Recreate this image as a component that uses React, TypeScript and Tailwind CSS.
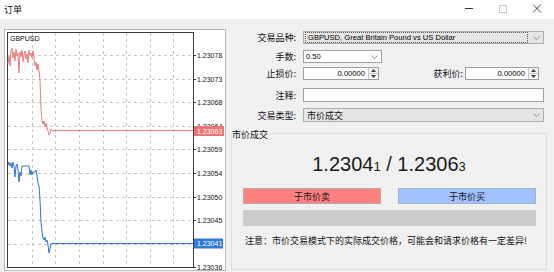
import React from "react";

const hGrid = [55, 79, 102, 126, 149, 173, 197, 220, 244];
const vGrid = [32, 55, 79, 103, 126, 150, 173];
const labels: [string, number][] = [
  ["1.23078", 55],
  ["1.23073", 79],
  ["1.23068", 102],
  ["1.23064", 126],
  ["1.23059", 149],
  ["1.23054", 173],
  ["1.23050", 197],
  ["1.23045", 220],
  ["1.23036", 267],
];

const redPts =
  "8,64 9,56 10,66 11,50 12,48 13,58 14,52 15,61 16,49 17,56 18,53 19,73 20,52 21,57 22,50 23,62 24,55 25,51 26,59 27,54 28,63 29,50 30,56 31,53 32,58 33,51 34,58 35,66 36,62 37,70 38,64 39,71 40,80 41,108 42,120 43,124 44,121 45,127 46,123 47,128 48,131 49,135 50,133 51,129 52,130.5 193,130.5";
const bluePts =
  "8,165 9,162 10,166 11,163 12,168 13,162 14,166 15,177 16,166 17,164 18,170 19,182 20,172 21,176 22,166 23,166 26,166 29,166 30,175 31,170 32,175 33,172 35,172 36,170 37,176 38,183 39,186 40,200 41,222 42,232 43,238 44,240 45,237 46,242 47,240 48,245 49,253 50,249 51,244 52,243.5 193,243.5";

function Chart() {
  return (
    <div className="ml-[4px] mt-[10px] w-[222px] h-[242px] border border-[#b9b9b9] bg-white shrink-0">
      <svg width="220" height="240" viewBox="0 0 220 240" className="block">
        <g transform="translate(-5,-30)">
          <rect x="7.5" y="32.5" width="186" height="235" fill="#ffffff" stroke="#3a3a3a" strokeWidth="1" />
          {hGrid.map((y) => (
            <line key={"h" + y} x1="8" x2="193" y1={y + 0.5} y2={y + 0.5} stroke="#c6c6c6" strokeDasharray="3 3" strokeWidth="1" />
          ))}
          {vGrid.map((x) => (
            <line key={"v" + x} x1={x + 0.5} x2={x + 0.5} y1="33" y2="267" stroke="#c6c6c6" strokeDasharray="3 3" strokeWidth="1" />
          ))}
          {labels.map(([t, y]) => (
            <g key={t}>
              <line x1="193" x2="196" y1={y + 0.5} y2={y + 0.5} stroke="#3a3a3a" strokeWidth="1" />
              <text x="197" y={y + 0.5} fontSize="7" fontFamily="'Liberation Sans', sans-serif" dominantBaseline="central" fill="#111">
                {t}
              </text>
            </g>
          ))}
          <text x="10" y="38" fontSize="7" fontFamily="'Liberation Sans', sans-serif" dominantBaseline="central" fill="#111">
            GBPUSD
          </text>
          <polyline points={redPts} fill="none" stroke="#ee7b7b" strokeWidth="1" />
          <polyline points={bluePts} fill="none" stroke="#2f74d6" strokeWidth="1" />
          <rect x="194" y="126" width="30" height="10" fill="#f07373" />
          <text x="197" y="131" fontSize="7" fontFamily="'Liberation Sans', sans-serif" dominantBaseline="central" fill="#ffffff">
            1.23063
          </text>
          <rect x="194" y="238.5" width="29" height="10" fill="#2e7be0" />
          <text x="197" y="243.5" fontSize="7" fontFamily="'Liberation Sans', sans-serif" dominantBaseline="central" fill="#ffffff">
            1.23041
          </text>
        </g>
      </svg>
    </div>
  );
}

function Chevron() {
  return (
    <svg width="7" height="4" viewBox="0 0 7 4" className="block">
      <path d="M0.5 0.5 L3.5 3.5 L6.5 0.5" fill="none" stroke="#808080" strokeWidth="0.9" />
    </svg>
  );
}

function Spin() {
  return (
    <div className="w-[10px] h-full flex flex-col border-l border-[#c8c8c8] bg-[#f3f3f3]">
      <div className="flex-1 flex items-center justify-center">
        <svg width="5" height="3" viewBox="0 0 5 3" className="block">
          <path d="M0 3 L2.5 0 L5 3 Z" fill="#404040" />
        </svg>
      </div>
      <div className="h-px bg-[#c8c8c8]" />
      <div className="flex-1 flex items-center justify-center">
        <svg width="5" height="3" viewBox="0 0 5 3" className="block">
          <path d="M0 0 L2.5 3 L5 0 Z" fill="#404040" />
        </svg>
      </div>
    </div>
  );
}

function Label({ children }: { children: React.ReactNode }) {
  return <div className="w-[65px] text-right text-[9px] leading-none text-[#111]">{children}</div>;
}

export default function App() {
  return (
    <div className="w-[554px] h-[272px] bg-[#f0f0f0] overflow-hidden flex flex-col font-['Noto_Sans_CJK_SC','Noto_Sans',sans-serif] text-[#111]">
      {/* title bar */}
      <div className="h-[19px] bg-white flex items-center shrink-0">
        <span className="ml-[4px] text-[9px] leading-none">订单</span>
        <div className="ml-auto flex h-full">
          <svg width="34" height="19" viewBox="0 0 34 19" className="block">
            <line x1="13" x2="21" y1="8.5" y2="8.5" stroke="#333" strokeWidth="1" />
          </svg>
          <svg width="34" height="19" viewBox="0 0 34 19" className="block">
            <rect x="13.5" y="5.5" width="7" height="7" fill="none" stroke="#c4c4c4" strokeWidth="1" />
          </svg>
          <svg width="34" height="19" viewBox="0 0 34 19" className="block">
            <path d="M13 4.5 L21 12.5 M21 4.5 L13 12.5" stroke="#333" strokeWidth="0.9" />
          </svg>
        </div>
      </div>

      {/* body */}
      <div className="flex flex-1">
        <Chart />

        <div className="ml-[5px] w-[316px] pt-[12px] flex flex-col shrink-0">
          {/* row 1 */}
          <div className="flex items-center h-[13px]">
            <Label>交易品种:</Label>
            <div className="ml-[7px] w-[241px] h-[13px] border border-[#adadad] bg-[#e5e5e5] flex items-center">
              <div className="ml-px w-[223px] h-[11px] border border-dotted border-[#555] flex items-center pl-[2px] font-['Liberation_Sans',sans-serif] text-[7.6px] leading-none text-black">
                GBPUSD, Great Britain Pound vs US Dollar
              </div>
              <div className="ml-auto mr-[3px]">
                <Chevron />
              </div>
            </div>
          </div>

          {/* row 2 */}
          <div className="flex items-center h-[13px] mt-[6px]">
            <Label>手数:</Label>
            <div className="ml-[7px] w-[79px] h-[13px] border border-[#a0a0a0] bg-white flex items-center pl-[2px] font-['Liberation_Sans',sans-serif] text-[7.6px] leading-none text-black">
              0.50
              <div className="ml-auto mr-[3px]">
                <Chevron />
              </div>
            </div>
          </div>

          {/* row 3 */}
          <div className="flex items-center h-[13px] mt-[4px]">
            <Label>止损价:</Label>
            <div className="ml-[7px] w-[76px] h-[13px] border border-[#a0a0a0] bg-white flex items-stretch">
              <div className="flex-1 flex items-center justify-end pr-[3px] font-['Liberation_Sans',sans-serif] text-[7.6px] leading-none text-black">
                0.00000
              </div>
              <Spin />
            </div>
            <div className="w-[84px] text-right text-[9px] leading-none">获利价:</div>
            <div className="ml-[2px] w-[74px] h-[13px] border border-[#a0a0a0] bg-white flex items-stretch">
              <div className="flex-1 flex items-center justify-end pr-[3px] font-['Liberation_Sans',sans-serif] text-[7.6px] leading-none text-black">
                0.00000
              </div>
              <Spin />
            </div>
          </div>

          {/* row 4 */}
          <div className="flex items-center h-[14px] mt-[8px]">
            <Label>注释:</Label>
            <div className="ml-[7px] w-[241px] h-[14px] border border-[#a0a0a0] bg-white" />
          </div>

          {/* row 5 */}
          <div className="flex items-center h-[14px] mt-[6px]">
            <Label>交易类型:</Label>
            <div className="ml-[7px] w-[241px] h-[14px] border border-[#adadad] bg-[#e5e5e5] flex items-center pl-[3px] text-[9px] leading-none">
              市价成交
              <div className="ml-auto mr-[3px]">
                <Chevron />
              </div>
            </div>
          </div>

          {/* group */}
          <div className="relative mt-[11px] w-[316px] h-[137px] border border-[#dcdcdc] flex flex-col">
            <span className="absolute left-0 top-[-4px] bg-[#f0f0f0] pr-[1px] text-[9px] leading-[9px]">市价成交</span>
            <div className="mt-[20px] h-[20px] flex justify-center font-['Liberation_Sans',sans-serif] text-[20px] leading-[20px] text-[#1a1a1a] whitespace-pre">
              <span>
                1.2304<span className="text-[13px]">1</span> / 1.2306<span className="text-[13px]">3</span>
              </span>
            </div>
            <div className="mt-[14px] ml-[11px] flex gap-[17px]">
              <div className="w-[138px] h-[16px] border border-[#b8a8a8] bg-[#ff8080] flex items-center justify-center text-[9px] leading-none">
                于市价卖
              </div>
              <div className="w-[138px] h-[16px] border border-[#a8b0c4] bg-[#a0c0ff] flex items-center justify-center text-[9px] leading-none">
                于市价买
              </div>
            </div>
            <div className="mt-[6px] ml-[11px] w-[293px] h-[16px] bg-[#cccccc]" />
            <div className="mt-[9px] ml-[13px] text-[9px] leading-[12px] whitespace-nowrap">
              注意：市价交易模式下的实际成交价格，可能会和请求价格有一定差异!
            </div>
          </div>
        </div>
      </div>
    </div>
  );
}
